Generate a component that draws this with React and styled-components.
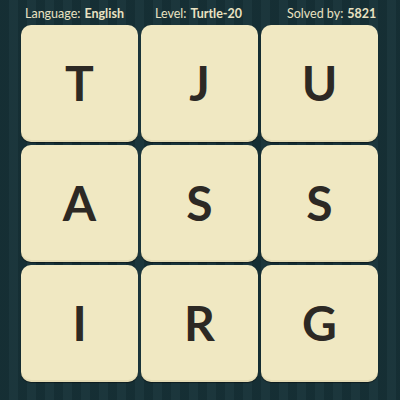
import React from "react";
import styled, { createGlobalStyle } from "styled-components";

const Global = createGlobalStyle`
  html, body { margin: 0; padding: 0; }
  body { background: #173238; }
`;

const Page = styled.div`
  width: 400px;
  height: 400px;
  box-sizing: border-box;
  padding: 4px 0 0 21px;
  background-color: #173238;
  background-image: repeating-linear-gradient(
    90deg,
    rgba(0, 0, 0, 0.07) 0px,
    rgba(0, 0, 0, 0.07) 9px,
    rgba(255, 255, 255, 0.02) 9px,
    rgba(255, 255, 255, 0.02) 18px
  );
  font-family: Lato, "Open Sans", sans-serif;
  overflow: hidden;
`;

const Header = styled.div`
  display: grid;
  grid-template-columns: 130px 132px 100px;
  height: 18px;
  align-items: center;
  font-size: 12.5px;
  color: #e9e2c2;
  margin-bottom: 3px;
  padding-left: 4px;
`;

const Stat = styled.div`
  white-space: nowrap;
`;

const Value = styled.b`
  font-weight: 700;
  margin-left: 4px;
`;

const Grid = styled.div`
  display: grid;
  grid-template-columns: repeat(3, 117px);
  grid-template-rows: repeat(3, 117px);
  gap: 3px;
`;

const Tile = styled.div`
  background: #f0e8c2;
  border-radius: 10px;
  box-shadow: 0 1px 1px rgba(0, 0, 0, 0.45), inset 0 -2px 0 rgba(150, 130, 80, 0.12);
  display: flex;
  align-items: center;
  justify-content: center;
  font-family: Lato, sans-serif;
  font-weight: 700;
  font-size: 48px;
  color: #2d2924;
  padding-bottom: 2px;
  box-sizing: border-box;
`;

const letters = ["T", "J", "U", "A", "S", "S", "I", "R", "G"];

export default function App() {
  return (
    <Page>
      <Global />
      <Header>
        <Stat>
          Language:<Value>English</Value>
        </Stat>
        <Stat>
          Level:<Value>Turtle-20</Value>
        </Stat>
        <Stat>
          Solved by:<Value>5821</Value>
        </Stat>
      </Header>
      <Grid>
        {letters.map((l, i) => (
          <Tile key={i}>{l}</Tile>
        ))}
      </Grid>
    </Page>
  );
}
